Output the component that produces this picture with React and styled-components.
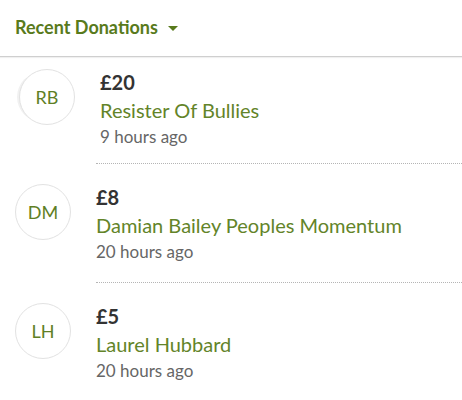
import React from 'react';
import styled, { createGlobalStyle } from 'styled-components';

const donations = [
  { id: 1, initials: 'RB', amount: '£20', name: 'Resister Of Bullies', when: '9 hours ago', fresh: true },
  { id: 2, initials: 'DM', amount: '£8', name: 'Damian Bailey Peoples Momentum', when: '20 hours ago' },
  { id: 3, initials: 'LH', amount: '£5', name: 'Laurel Hubbard', when: '20 hours ago' },
];

const App = () => {
  return (
    <>
      <GlobalStyle />
      <Panel>
        <Header>
          <Title>Recent Donations</Title>
          <Caret />
        </Header>
        <List>
          {donations.map((d) => (
            <Item key={d.id}>
              <Avatar $fresh={d.fresh}>{d.initials}</Avatar>
              <Details $fresh={d.fresh}>
                <Amount>{d.amount}</Amount>
                <Donor>{d.name}</Donor>
                <When>{d.when}</When>
              </Details>
            </Item>
          ))}
        </List>
      </Panel>
    </>
  );
};

const GlobalStyle = createGlobalStyle`
  body {
    margin: 0;
    background: #ffffff;
    font-family: Lato, "Open Sans", sans-serif;
  }
`;

const Panel = styled.div`
  width: 462px;
  background: #ffffff;
`;

const Header = styled.div`
  display: flex;
  align-items: center;
  gap: 10px;
  box-sizing: border-box;
  height: 57px;
  padding: 0 15px 2px;
  border-bottom: 1px solid #cfcfcf;
  box-shadow: 0 1px 1px rgba(0, 0, 0, 0.06);
`;

const Title = styled.h2`
  margin: 0;
  font-size: 18px;
  line-height: 24px;
  font-weight: 700;
  color: #587a1c;
`;

const Caret = styled.span`
  width: 0;
  height: 0;
  border-left: 5px solid transparent;
  border-right: 5px solid transparent;
  border-top: 5px solid #587a1c;
  margin-top: 2px;
`;

const List = styled.ul`
  margin: 0;
  padding: 0;
  list-style: none;
`;

const Item = styled.li`
  display: grid;
  grid-template-columns: 96px 1fr;
  align-items: start;
`;

const Avatar = styled.div`
  box-sizing: border-box;
  width: 56px;
  height: 56px;
  margin-left: ${(p) => (p.$fresh ? '19px' : '15px')};
  margin-top: ${(p) => (p.$fresh ? '12px' : '20px')};
  border: 1px solid #e2e2e2;
  border-radius: 50%;
  background: #ffffff;
  box-shadow: ${(p) => (p.$fresh ? '-5px 0 0 -3px #f1f1f1' : 'none')};
  display: flex;
  align-items: center;
  justify-content: center;
  font-size: 18px;
  color: #5f7f25;
`;

const Details = styled.div`
  display: flex;
  flex-direction: column;
  padding: ${(p) => (p.$fresh ? '12px 0 14px 4px' : '20px 0 18px 0')};
  border-bottom: 1px dotted #b5b5b5;
`;

const Amount = styled.span`
  font-size: 20px;
  line-height: 26px;
  font-weight: 700;
  color: #333333;
`;

const Donor = styled.span`
  font-size: 20px;
  line-height: 30px;
  color: #638429;
`;

const When = styled.span`
  font-size: 17px;
  line-height: 24px;
  color: #666666;
`;

export default App;
